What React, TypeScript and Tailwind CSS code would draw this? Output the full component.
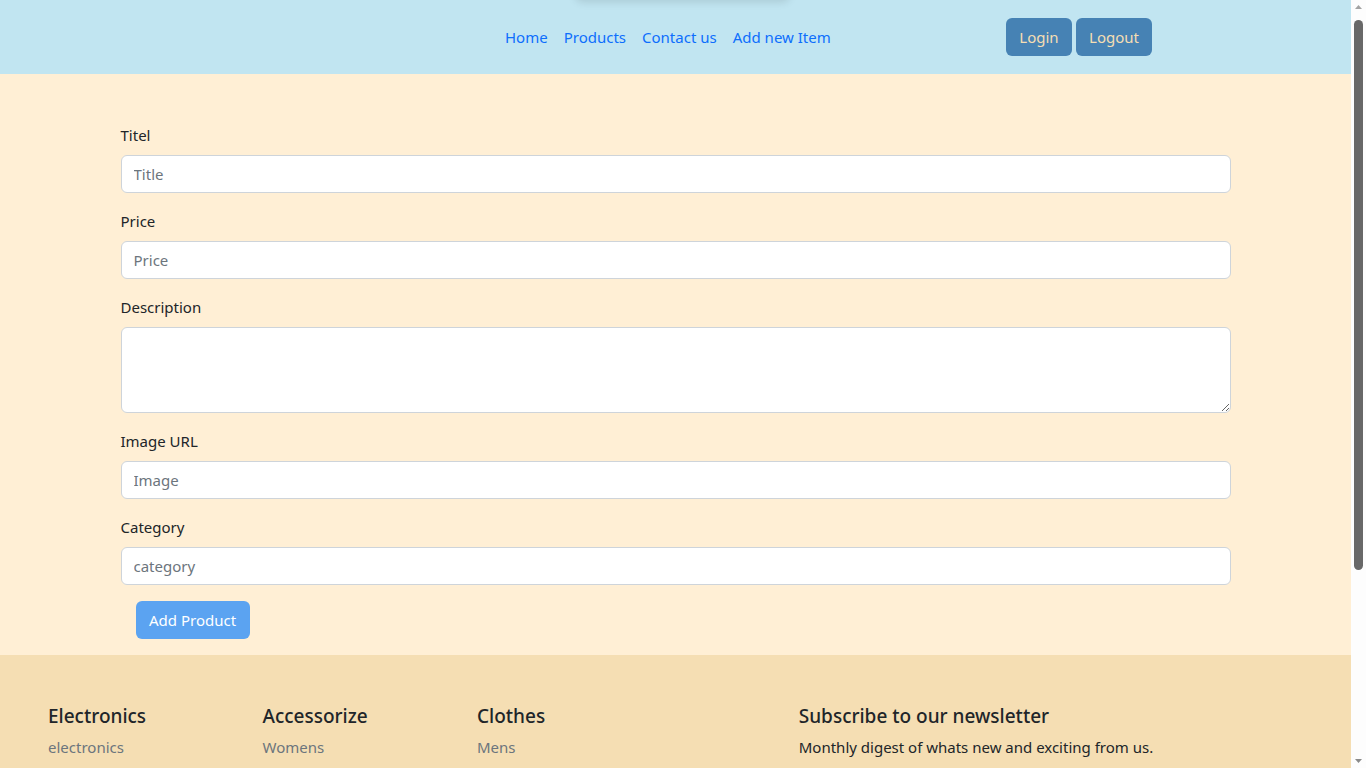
const font = { fontFamily: '"Noto Sans", "Open Sans", Roboto, sans-serif' };

const navLinks = ['Home', 'Products', 'Contact us', 'Add new Item'];

const fields = [
  { label: 'Titel', placeholder: 'Title' },
  { label: 'Price', placeholder: 'Price' },
];

const footerCols = [
  { title: 'Electronics', links: ['electronics'] },
  { title: 'Accessorize', links: ['Womens'] },
  { title: 'Clothes', links: ['Mens'] },
];

const inputCls =
  'block h-[38px] w-full rounded-md border border-[#ced4da] bg-white px-3 text-[15px] placeholder:text-[#6c757d] focus:outline-none';

// classic window scrollbar drawn at the right edge
const Scrollbar = () => (
  <div className="flex w-[15px] shrink-0 flex-col items-center bg-[#fdfdfd]">
    <svg width="15" height="15" viewBox="0 0 15 15" className="shrink-0">
      <path d="M4 9 L7.5 5 L11 9 Z" fill="#a3a3a3" />
    </svg>
    <div className="mt-[5px] h-[550px] w-[9px] rounded-full bg-[#686868]" />
    <div className="flex-1" />
    <svg width="15" height="15" viewBox="0 0 15 15" className="shrink-0">
      <path d="M4 6 L7.5 10 L11 6 Z" fill="#8a8a8a" />
    </svg>
  </div>
);

const App = () => {
  return (
    <div className="flex h-screen overflow-hidden text-[#212529]" style={font}>
      <div className="flex min-w-0 flex-1 flex-col">
        {/* navbar */}
        <header className="relative flex h-[74px] shrink-0 items-center bg-[#c1e5f1] pl-[497px] pr-[199px]">
          <div className="absolute -top-[40px] left-[575px] h-[40px] w-[215px] rounded-lg bg-[#c1e5f1] shadow-[0_2px_8px_rgba(0,0,0,0.12)]" />
          <ul className="flex items-center">
            {navLinks.map((link) => (
              <li key={link}>
                <a href="#" className="block px-2 py-2 text-[15px] text-[#0d6efd]">
                  {link}
                </a>
              </li>
            ))}
          </ul>
          <div className="ml-auto flex gap-1">
            <button className="h-[38px] rounded-md bg-[#4682b4] px-[13.5px] text-[15px] text-[#f5deb3]">Login</button>
            <button className="h-[38px] rounded-md bg-[#4682b4] px-[13px] text-[15px] text-[#f5deb3]">Logout</button>
          </div>
        </header>

        {/* form */}
        <main className="shrink-0 bg-[#ffefd5] pb-4 pt-[49px]">
          <form className="mx-auto w-[1110px]" onSubmit={(e) => e.preventDefault()}>
            {fields.map((f) => (
              <div key={f.label} className="mb-4">
                <label className="mb-2 block text-[15px] leading-6">{f.label}</label>
                <input placeholder={f.placeholder} className={inputCls} />
              </div>
            ))}
            <div className="mb-4">
              <label className="mb-2 block text-[15px] leading-6">Description</label>
              <textarea className="block h-[86px] w-full rounded-md border border-[#ced4da] bg-white px-3 py-1.5 text-[15px] focus:outline-none" />
            </div>
            <div className="mb-4">
              <label className="mb-2 block text-[15px] leading-6">Image URL</label>
              <input placeholder="Image" className={inputCls} />
            </div>
            <div>
              <label className="mb-2 block text-[15px] leading-6">Category</label>
              <input placeholder="category" className={inputCls} />
            </div>
            <button
              type="submit"
              className="ml-[15px] mt-4 h-[38px] rounded-md bg-[#5ba3f1] px-[13.5px] text-[15px] text-white"
            >
              Add Product
            </button>
          </form>
        </main>

        {/* footer */}
        <footer className="flex-1 bg-[#f5deb3] px-8 pt-[49px]">
          <div className="grid grid-cols-12">
            {footerCols.map((col) => (
              <div key={col.title} className="col-span-2 px-4">
                <h5 className="mb-[7px] text-[19px] font-medium leading-6">{col.title}</h5>
                <ul>
                  {col.links.map((l) => (
                    <li key={l}>
                      <a href="#" className="text-[15px] leading-6 text-[#6c757d]">
                        {l}
                      </a>
                    </li>
                  ))}
                </ul>
              </div>
            ))}
            <div className="col-span-5 col-start-8 px-4">
              <h5 className="mb-[7px] text-[19px] font-medium leading-6">Subscribe to our newsletter</h5>
              <p className="text-[15px] leading-6">Monthly digest of whats new and exciting from us.</p>
            </div>
          </div>
        </footer>
      </div>
      <Scrollbar />
    </div>
  );
};

export default App;
